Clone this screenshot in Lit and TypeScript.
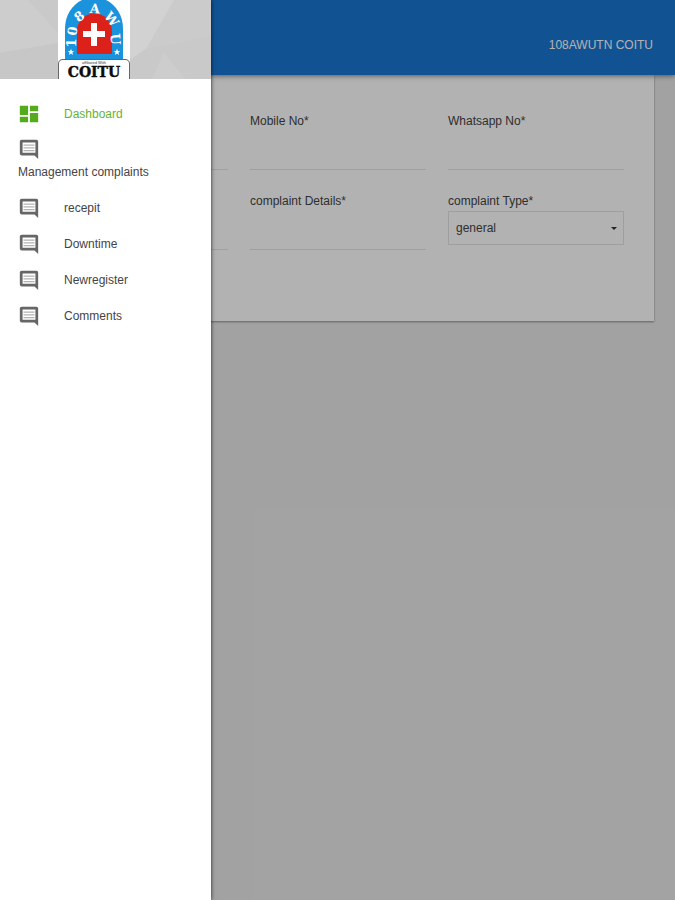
import { LitElement, html, svg, css } from "lit";
import { customElement, state } from "lit/decorators.js";
import { classMap } from "lit/directives/class-map.js";

const dashboardIcon = svg`<path d="M2 3h9V13H2zM2 15h9v6H2zM13 11h9v10h-9zM13 3h9v6h-9z"/>`;
const commentIcon = svg`<path fill-rule="evenodd" d="M22 4c0-1.100-.9-2-2-2H4c-1.100 0-2 .9-2 2v13c0 1.100.9 2 2 2h14l4 4zM19 5v11H5V5z"/><path d="M6 7h12v1.500H6zM6 10h12v1.500H6zM6 13h12v1.500H6z" opacity=".5"/>`;

const items = [
  { label: "Dashboard", icon: dashboardIcon },
  { label: "Management complaints", icon: commentIcon, stacked: true },
  { label: "recepit", icon: commentIcon },
  { label: "Downtime", icon: commentIcon },
  { label: "Newregister", icon: commentIcon },
  { label: "Comments", icon: commentIcon },
];

const archLetters = [
  { ch: "1", x: 13, y: 43, a: -90 },
  { ch: "0", x: 14, y: 31, a: -80 },
  { ch: "8", x: 21, y: 16, a: -38 },
  { ch: "A", x: 37, y: 8, a: 4 },
  { ch: "W", x: 54, y: 19, a: 52 },
  { ch: "U", x: 58, y: 39, a: 86 },
];

@customElement("union-logo")
export class UnionLogo extends LitElement {
  static styles = css`
    :host {
      display: block;
      width: 72px;
      height: 78px;
    }
    .logo {
      display: block;
      width: 100%;
      height: 100%;
      overflow: visible;
    }
    .arch {
      font: bold 13px "DejaVu Serif", serif;
      fill: #fff;
      text-anchor: middle;
    }
    .small {
      font: 4px "Liberation Sans", sans-serif;
      fill: #333;
      text-anchor: middle;
    }
    .name {
      font: bold 14px "DejaVu Serif", serif;
      fill: #0c0c0c;
      stroke: #0c0c0c;
      stroke-width: 0.4px;
      text-anchor: middle;
    }
  `;

  render() {
    const star = "M0-3.200L.9-1H3.200L1.400.6 2 2.900 0 1.600-2 2.900-1.400.6-3.200-1H-.9z";
    return html`<svg class="logo" viewBox="0 0 72 78" role="img" aria-label="108AWU COITU">
      <rect width="72" height="78" fill="#fff" />
      <path d="M7 59V29C7 15 14 5 24 0H48C58 5 65 15 65 29V59z" fill="#1b93dc" />
      <path d="M19 54V31a17.500 17.500 0 0 1 35 0v23z" fill="#db2119" />
      <path d="M33 23h6v8h8v6h-8v9h-6v-9h-8v-6h8z" fill="#fff" />
      ${archLetters.map(
        (l) => svg`<text class="arch" transform="translate(${l.x} ${l.y}) rotate(${l.a})" y="5">${l.ch}</text>`
      )}
      <path d=${star} transform="translate(13 52)" fill="#fff" />
      <path d=${star} transform="translate(59 52)" fill="#fff" />
      <path d="M.5 79V64q0-4.500 4.500-4.500h62q4.500 0 4.500 4.500v15" fill="#fff" stroke="#666" />
      <text class="small" x="36" y="64">affiliated With</text>
      <text class="name" x="36" y="77">COITU</text>
    </svg>`;
  }
}

@customElement("app-root")
export class AppRoot extends LitElement {
  @state() private active = "Dashboard";

  static styles = css`
    :host {
      display: block;
      position: relative;
      min-height: 100vh;
      background: #e9e9e9;
      font: 12px/20px "Liberation Sans", Arial, sans-serif;
      color: #444;
    }
    * {
      box-sizing: border-box;
    }
    .topbar {
      position: relative;
      display: flex;
      align-items: center;
      justify-content: flex-end;
      height: 75px;
      padding: 14px 22px 0;
      background: #1976d2;
      color: #fff;
      box-shadow: 0 1px 5px rgba(0, 0, 0, 0.5);
    }
    .brand {
      color: inherit;
      text-decoration: none;
    }
    .card {
      display: grid;
      grid-template-columns: repeat(3, 1fr);
      gap: 21px 22px;
      margin: 0 21px 0 20px;
      padding: 36px 30px 71px 32px;
      background: #fff;
      box-shadow: 0 1px 2px rgba(0, 0, 0, 0.4);
    }
    .field {
      display: flex;
      flex-direction: column;
      min-width: 0;
    }
    .label {
      min-height: 20px;
    }
    .input {
      width: 100%;
      height: 39px;
      padding: 0;
      border: 0;
      border-bottom: 1px solid #e4e4e4;
      background: transparent;
      font: inherit;
      color: inherit;
    }
    .select-box {
      display: grid;
      align-items: center;
    }
    .select {
      grid-area: 1 / 1;
      appearance: none;
      width: 100%;
      height: 34px;
      padding: 0 24px 0 7px;
      border: 1px solid #e4e4e4;
      border-radius: 0;
      background: transparent;
      font: inherit;
      color: inherit;
    }
    .caret {
      grid-area: 1 / 1;
      justify-self: end;
      width: 6px;
      height: 3px;
      margin-right: 7px;
      fill: #333;
      pointer-events: none;
    }
    .backdrop {
      position: absolute;
      inset: 0;
      background: rgba(0, 0, 0, 0.3);
    }
    .drawer {
      position: absolute;
      inset: 0 auto 0 0;
      width: 211px;
      background: #fff;
      box-shadow: 0 0 4px rgba(0, 0, 0, 0.8);
    }
    .banner {
      position: relative;
      display: flex;
      height: 79px;
      padding-left: 58px;
      background: #cbcbcb;
    }
    .facets {
      position: absolute;
      inset: 0;
      width: 100%;
      height: 100%;
    }
    .logo {
      position: relative;
    }
    .menu {
      margin: 0;
      padding: 17px 0;
      list-style: none;
    }
    .item {
      display: flex;
      align-items: center;
      min-height: 36px;
      padding: 0 18px;
      gap: 24px;
      color: #444;
      text-decoration: none;
    }
    .item.stacked {
      flex-direction: column;
      align-items: flex-start;
      gap: 2px;
      padding-top: 6px;
      padding-bottom: 8px;
    }
    .item.active {
      color: #67b32e;
    }
    .icon {
      width: 22px;
      height: 22px;
      fill: #666;
    }
    .item.active .icon {
      fill: #55ab1c;
    }
  `;

  private field(id: string, label: string, hidden = "") {
    return html`<div class="field">
      <label class="label" for=${id}>${label}</label>
      <input class="input" id=${id} type="text" aria-label=${label || hidden} />
    </div>`;
  }

  render() {
    return html`
      <header class="topbar"><a class="brand" href="#">108AWUTN COITU</a></header>
      <form class="card">
        ${this.field("name", "", "Name")}
        ${this.field("mobile", "Mobile No*")}
        ${this.field("whatsapp", "Whatsapp No*")}
        ${this.field("email", "", "Email")}
        ${this.field("details", "complaint Details*")}
        <div class="field">
          <label class="label" for="type">complaint Type*</label>
          <div class="select-box">
            <select class="select" id="type"><option>general</option></select>
            <svg class="caret" viewBox="0 0 6 3" aria-hidden="true"><path d="M0 0h6L3 3z" /></svg>
          </div>
        </div>
      </form>
      <div class="backdrop"></div>
      <aside class="drawer">
        <div class="banner">
          <svg class="facets" viewBox="0 0 211 79" preserveAspectRatio="none" aria-hidden="true">
            <path d="M0 0H58V43L0 53z" fill="#cdcdcd" />
            <path d="M0 53L58 43V79H0z" fill="#c7c7c7" />
            <path d="M28 0H58V33z" fill="#c9c9c9" />
            <path d="M130 0H174L146 49 130 60z" fill="#d2d2d2" />
            <path d="M146 49L211 36V79H130V60z" fill="#c9c9c9" />
            <path d="M164 52L185 79H152z" fill="#cdcdcd" />
          </svg>
          <union-logo class="logo"></union-logo>
        </div>
        <nav>
          <ul class="menu">
            ${items.map(
              (it) => html`<li>
                <a
                  href="#"
                  class=${classMap({ item: true, stacked: !!it.stacked, active: it.label === this.active })}
                  @click=${() => (this.active = it.label)}
                >
                  <svg class="icon" viewBox="0 0 24 24" aria-hidden="true">${it.icon}</svg>
                  <span>${it.label}</span>
                </a>
              </li>`
            )}
          </ul>
        </nav>
      </aside>
    `;
  }
}
